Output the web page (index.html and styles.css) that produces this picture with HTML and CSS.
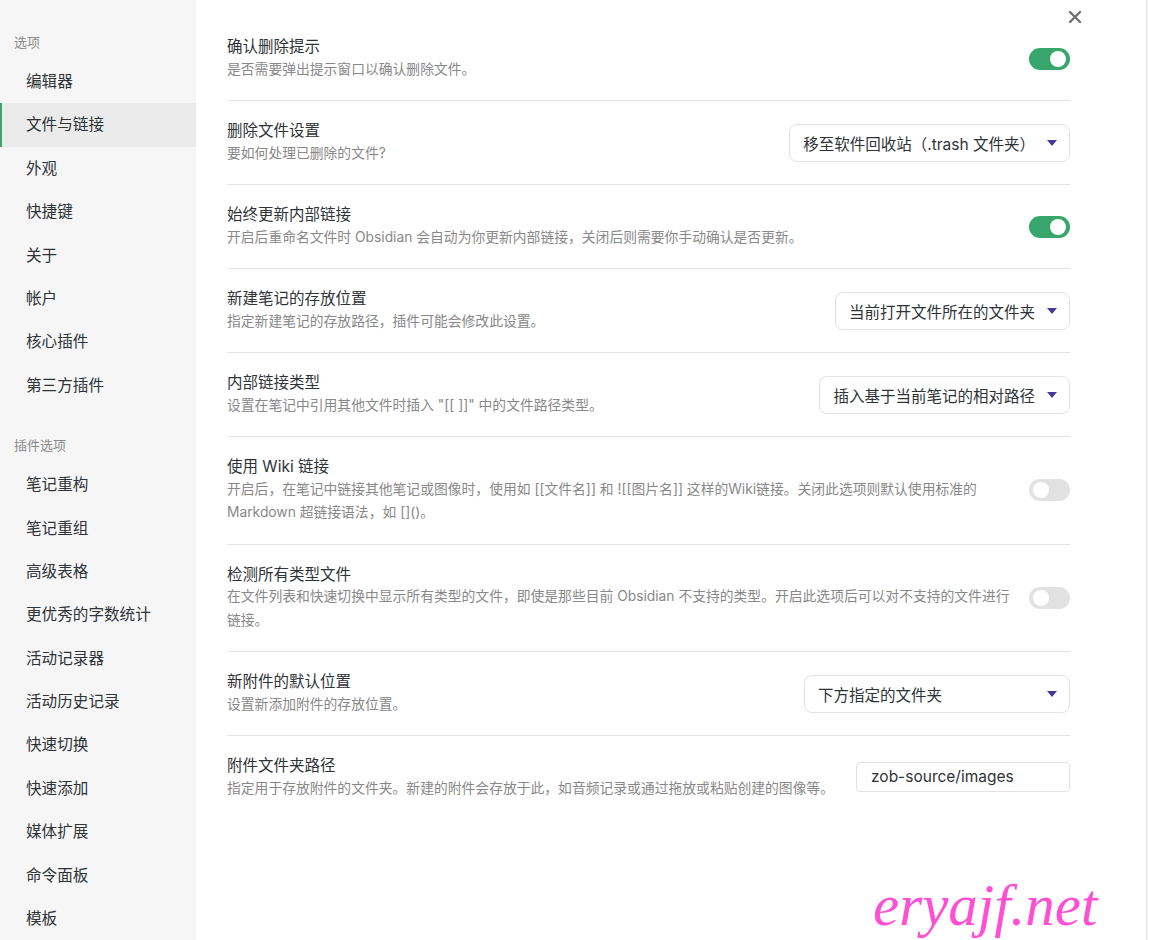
FILE: index.html
```html
<!DOCTYPE html>
<html lang="zh-CN">
<head>
<meta charset="utf-8">
<title>设置 - 文件与链接</title>
<link rel="stylesheet" href="styles.css">
</head>
<body>
<div class="app">
  <nav class="sidebar">
    <div class="group-title first">选项</div>
    <div class="nav-item">编辑器</div>
    <div class="nav-item active">文件与链接</div>
    <div class="nav-item">外观</div>
    <div class="nav-item">快捷键</div>
    <div class="nav-item">关于</div>
    <div class="nav-item">帐户</div>
    <div class="nav-item">核心插件</div>
    <div class="nav-item">第三方插件</div>
    <div class="group-title">插件选项</div>
    <div class="nav-item">笔记重构</div>
    <div class="nav-item">笔记重组</div>
    <div class="nav-item">高级表格</div>
    <div class="nav-item">更优秀的字数统计</div>
    <div class="nav-item">活动记录器</div>
    <div class="nav-item">活动历史记录</div>
    <div class="nav-item">快速切换</div>
    <div class="nav-item">快速添加</div>
    <div class="nav-item">媒体扩展</div>
    <div class="nav-item">命令面板</div>
    <div class="nav-item">模板</div>
  </nav>
  <main class="content">
    <div class="close" aria-label="关闭">
      <svg width="14" height="14" viewBox="0 0 14 14"><path d="M2 2 L12 12 M12 2 L2 12" stroke="#707070" stroke-width="2.4" stroke-linecap="round"/></svg>
    </div>
    <div class="setting first">
      <div class="info">
        <div class="name">确认删除提示</div>
        <div class="desc">是否需要弹出提示窗口以确认删除文件。</div>
      </div>
      <div class="control"><div class="toggle on"></div></div>
    </div>
    <div class="setting">
      <div class="info">
        <div class="name">删除文件设置</div>
        <div class="desc">要如何处理已删除的文件?</div>
      </div>
      <div class="control"><div class="dropdown">移至软件回收站（.trash 文件夹）<span class="caret"></span></div></div>
    </div>
    <div class="setting">
      <div class="info">
        <div class="name">始终更新内部链接</div>
        <div class="desc">开启后重命名文件时 Obsidian 会自动为你更新内部链接，关闭后则需要你手动确认是否更新。</div>
      </div>
      <div class="control"><div class="toggle on"></div></div>
    </div>
    <div class="setting">
      <div class="info">
        <div class="name">新建笔记的存放位置</div>
        <div class="desc">指定新建笔记的存放路径，插件可能会修改此设置。</div>
      </div>
      <div class="control"><div class="dropdown">当前打开文件所在的文件夹<span class="caret"></span></div></div>
    </div>
    <div class="setting">
      <div class="info">
        <div class="name">内部链接类型</div>
        <div class="desc">设置在笔记中引用其他文件时插入 "[[ ]]" 中的文件路径类型。</div>
      </div>
      <div class="control"><div class="dropdown">插入基于当前笔记的相对路径<span class="caret"></span></div></div>
    </div>
    <div class="setting">
      <div class="info">
        <div class="name">使用 Wiki 链接</div>
        <div class="desc">开启后，在笔记中链接其他笔记或图像时，使用如 [[文件名]] 和 ![[图片名]] 这样的Wiki链接。关闭此选项则默认使用标准的 Markdown 超链接语法，如 []()。</div>
      </div>
      <div class="control"><div class="toggle"></div></div>
    </div>
    <div class="setting">
      <div class="info">
        <div class="name">检测所有类型文件</div>
        <div class="desc">在文件列表和快速切换中显示所有类型的文件，即使是那些目前 Obsidian 不支持的类型。开启此选项后可以对不支持的文件进行链接。</div>
      </div>
      <div class="control"><div class="toggle"></div></div>
    </div>
    <div class="setting">
      <div class="info">
        <div class="name">新附件的默认位置</div>
        <div class="desc">设置新添加附件的存放位置。</div>
      </div>
      <div class="control"><div class="dropdown wide">下方指定的文件夹<span class="caret"></span></div></div>
    </div>
    <div class="setting">
      <div class="info">
        <div class="name">附件文件夹路径</div>
        <div class="desc">指定用于存放附件的文件夹。新建的附件会存放于此，如音频记录或通过拖放或粘贴创建的图像等。</div>
      </div>
      <div class="control"><div class="textbox">zob-source/images</div></div>
    </div>
  </main>
  <div class="edge"></div>
</div>
<div class="watermark">eryajf.net</div>
</body>
</html>
```

FILE: styles.css
```css
html, body {
  margin: 0;
  padding: 0;
  background: #ffffff;
}
body {
  font-family: "Inter", "Noto Sans CJK SC", sans-serif;
  color: #2e3338;
  width: 1149px;
  height: 940px;
  overflow: hidden;
  position: relative;
}
.app {
  display: flex;
  height: 940px;
}
.sidebar {
  width: 196px;
  flex: none;
  background: #f6f6f6;
  padding-top: 28px;
  box-sizing: border-box;
}
.group-title {
  height: 32px;
  line-height: 28px;
  padding-left: 14px;
  font-size: 13px;
  color: #8a8a8a;
  margin-top: 24px;
}
.group-title.first {
  margin-top: 0;
}
.nav-item {
  height: 43.4px;
  line-height: 43.4px;
  padding-left: 26px;
  font-size: 15.6px;
  color: #2e3338;
  box-sizing: border-box;
}
.nav-item.active {
  background: #ebebeb;
  border-left: 2px solid #3aa56d;
  padding-left: 24px;
}
.content {
  flex: 1;
  padding: 16px 76px 0 31px;
  position: relative;
}
.edge {
  width: 2px;
  flex: none;
  border-left: 1px solid #e6e6e6;
  background: #f7f7f7;
}
.close {
  position: absolute;
  top: 10px;
  right: 64px;
  width: 14px;
  height: 14px;
}
.close svg {
  display: block;
}
.setting {
  display: flex;
  align-items: center;
  padding: 19px 0;
  border-top: 1px solid #e3e3e3;
}
.setting.first {
  border-top: 1px solid transparent;
}
.info {
  flex: 1;
  min-width: 0;
}
.name {
  font-size: 15.5px;
  line-height: 21.5px;
  color: #2e3338;
}
.desc {
  font-size: 13.8px;
  line-height: 23.5px;
  color: #888888;
}
.control {
  flex: none;
  display: flex;
  justify-content: flex-end;
  padding-left: 14px;
}
.toggle {
  width: 41px;
  height: 22px;
  border-radius: 11px;
  background: #e2e2e2;
  position: relative;
}
.toggle::after {
  content: "";
  position: absolute;
  top: 3px;
  left: 4px;
  width: 16px;
  height: 16px;
  border-radius: 50%;
  background: #ffffff;
}
.toggle.on {
  background: #36a66b;
}
.toggle.on::after {
  left: auto;
  right: 4px;
}
.dropdown {
  height: 38px;
  box-sizing: border-box;
  border: 1px solid #e2e2e2;
  border-radius: 8px;
  padding: 0 12px 0 13px;
  display: flex;
  align-items: center;
  font-size: 15.5px;
  color: #2e3338;
  white-space: nowrap;
}
.dropdown.wide {
  width: 266px;
  justify-content: space-between;
}
.caret {
  display: inline-block;
  width: 0;
  height: 0;
  margin-left: 12px;
  border-left: 5px solid transparent;
  border-right: 5px solid transparent;
  border-top: 6px solid #483699;
}
.textbox {
  width: 214px;
  height: 30px;
  box-sizing: border-box;
  border: 1px solid #e2e2e2;
  border-radius: 4px;
  padding-left: 14px;
  font-size: 15.5px;
  line-height: 28px;
  color: #2e3338;
  margin-bottom: 2px;
}
.watermark {
  position: absolute;
  left: 873px;
  top: 872px;
  font-family: "Liberation Serif", serif;
  font-style: italic;
  font-size: 59px;
  line-height: 66px;
  color: #ff4fd3;
}
```
